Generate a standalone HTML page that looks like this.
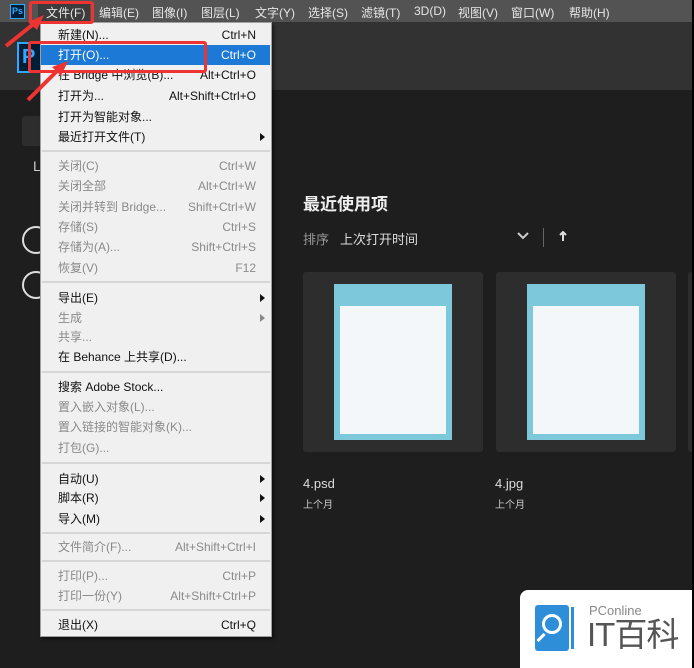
<!DOCTYPE html>
<html><head><meta charset="utf-8"><style>
*{margin:0;padding:0;box-sizing:border-box}
body{width:694px;height:668px;overflow:hidden;background:#1e1e1e;position:relative;font-family:"Liberation Sans","Noto Sans CJK SC",sans-serif}
.a{position:absolute}
#bar{left:0;top:0;width:694px;height:22px;background:#535353}
#bar span{position:absolute;top:4px;font-size:12px;color:#e6e6e6}
#band{left:0;top:22px;width:694px;height:68px;background:#323232}
#menu{left:40px;top:22px;width:232px;height:615px;background:#f0f0f0;border:1px solid #a0a0a0;box-shadow:2px 2px 3px rgba(0,0,0,.5)}
.r{position:absolute;left:41px;width:229px;height:20px;font-size:12px;line-height:20px;color:#111}
.r b{font-weight:normal;position:absolute;left:17px}
.r i{font-style:normal;position:absolute;right:14px}
.r.g{color:#8a8a8a}
.r.s::after{content:"";position:absolute;right:5px;top:6px;border-left:5px solid #111;border-top:4px solid transparent;border-bottom:4px solid transparent}
.r.g.s::after{border-left-color:#888}
.sep{position:absolute;left:42px;width:228px;height:2px;background:#d6d6d6}
.card{background:#2d2d2d;width:180px;height:180px;top:272px;border-radius:3px}
.blue{background:#7ec8dc;width:118px;height:156px}
.wh{background:#f4f7f9;width:106px;height:128px}
</style></head><body>
<div class="a" id="bar">
<div class="a" style="left:10px;top:4px;width:15px;height:15px;background:#001e36;border:1px solid #31a8ff;color:#31a8ff;font-size:9px;font-weight:bold;line-height:13px;text-align:center">Ps</div>
<div class="a" style="left:38px;top:2px;width:52px;height:19px;background:#3c3c3c"></div>
<span style="left:46px">文件(F)</span><span style="left:99px">编辑(E)</span><span style="left:152px">图像(I)</span><span style="left:201px">图层(L)</span><span style="left:255px">文字(Y)</span><span style="left:308px">选择(S)</span><span style="left:361px">滤镜(T)</span><span style="left:414px">3D(D)</span><span style="left:458px">视图(V)</span><span style="left:511px">窗口(W)</span><span style="left:569px">帮助(H)</span>
</div>
<div class="a" id="band"></div>
<div class="a" style="left:17px;top:42px;width:30px;height:31px;border:2px solid #31a8ff;background:#001e36;color:#31a8ff;font-size:20px;font-weight:bold;line-height:27px;padding-left:3px">P</div>
<div class="a" style="left:22px;top:116px;width:20px;height:30px;background:#2d2d2d;border-radius:3px"></div>
<div class="a" style="left:33px;top:158px;color:#ccc;font-size:14px">L</div>
<div class="a" style="left:22px;top:226px;width:28px;height:28px;border:2px solid #ddd;border-radius:50%"></div>
<div class="a" style="left:22px;top:271px;width:28px;height:28px;border:2px solid #ddd;border-radius:50%"></div>

<div class="a" style="left:303px;top:190px;color:#eee;font-size:17px;font-weight:bold">最近使用项</div>
<div class="a" style="left:303px;top:229px;color:#999;font-size:13px">排序</div>
<div class="a" style="left:340px;top:229px;color:#ddd;font-size:13px">上次打开时间</div>
<svg class="a" style="left:517px;top:232px" width="12" height="8"><path d="M1 1L6 6L11 1" stroke="#ccc" stroke-width="2" fill="none"/></svg>
<div class="a" style="left:543px;top:228px;width:1px;height:19px;background:#666"></div>
<svg class="a" style="left:559px;top:231px" width="8" height="10"><path d="M4 1V10M1 4L4 1L7 4" stroke="#ddd" stroke-width="2" fill="none"/></svg>
<div class="a card" style="left:303px"></div><div class="a blue" style="left:334px;top:284px"></div><div class="a wh" style="left:340px;top:306px"></div>
<div class="a card" style="left:496px"></div><div class="a blue" style="left:527px;top:284px"></div><div class="a wh" style="left:533px;top:306px"></div>
<div class="a card" style="left:688px;width:10px"></div>
<div class="a" style="left:303px;top:476px;color:#ddd;font-size:13px">4.psd</div>
<div class="a" style="left:303px;top:496px;color:#ccc;font-size:10px">上个月</div>
<div class="a" style="left:495px;top:476px;color:#ddd;font-size:13px">4.jpg</div>
<div class="a" style="left:495px;top:496px;color:#ccc;font-size:10px">上个月</div>

<div class="a" id="menu"></div>
<div class="a" style="left:41px;top:45px;width:229px;height:20px;background:#1c7ad6"></div>
<div class="r" style="top:25px"><b>新建(N)...</b><i>Ctrl+N</i></div>
<div class="r" style="top:45px;color:#fff"><b>打开(O)...</b><i>Ctrl+O</i></div>
<div class="r" style="top:65px"><b>在 Bridge 中浏览(B)...</b><i>Alt+Ctrl+O</i></div>
<div class="r" style="top:86px"><b>打开为...</b><i>Alt+Shift+Ctrl+O</i></div>
<div class="r" style="top:107px"><b>打开为智能对象...</b></div>
<div class="r s" style="top:127px"><b>最近打开文件(T)</b></div>
<div class="sep" style="top:150px"></div>
<div class="r g" style="top:156px"><b>关闭(C)</b><i>Ctrl+W</i></div>
<div class="r g" style="top:176px"><b>关闭全部</b><i>Alt+Ctrl+W</i></div>
<div class="r g" style="top:197px"><b>关闭并转到 Bridge...</b><i>Shift+Ctrl+W</i></div>
<div class="r g" style="top:217px"><b>存储(S)</b><i>Ctrl+S</i></div>
<div class="r g" style="top:237px"><b>存储为(A)...</b><i>Shift+Ctrl+S</i></div>
<div class="r g" style="top:258px"><b>恢复(V)</b><i>F12</i></div>
<div class="sep" style="top:281px"></div>
<div class="r s" style="top:288px"><b>导出(E)</b></div>
<div class="r g s" style="top:308px"><b>生成</b></div>
<div class="r g" style="top:327px"><b>共享...</b></div>
<div class="r" style="top:347px"><b>在 Behance 上共享(D)...</b></div>
<div class="sep" style="top:371px"></div>
<div class="r" style="top:377px"><b>搜索 Adobe Stock...</b></div>
<div class="r g" style="top:397px"><b>置入嵌入对象(L)...</b></div>
<div class="r g" style="top:417px"><b>置入链接的智能对象(K)...</b></div>
<div class="r g" style="top:438px"><b>打包(G)...</b></div>
<div class="sep" style="top:462px"></div>
<div class="r s" style="top:469px"><b>自动(U)</b></div>
<div class="r s" style="top:488px"><b>脚本(R)</b></div>
<div class="r s" style="top:509px"><b>导入(M)</b></div>
<div class="sep" style="top:532px"></div>
<div class="r g" style="top:537px"><b>文件简介(F)...</b><i>Alt+Shift+Ctrl+I</i></div>
<div class="sep" style="top:560px"></div>
<div class="r g" style="top:566px"><b>打印(P)...</b><i>Ctrl+P</i></div>
<div class="r g" style="top:586px"><b>打印一份(Y)</b><i>Alt+Shift+Ctrl+P</i></div>
<div class="sep" style="top:609px"></div>
<div class="r" style="top:615px"><b>退出(X)</b><i>Ctrl+Q</i></div>

<div class="a" style="left:29px;top:1px;width:65px;height:23px;border:3px solid #e33;border-radius:3px"></div>
<div class="a" style="left:28px;top:41px;width:179px;height:32px;border:3px solid #e33;border-radius:3px"></div>
<svg class="a" style="left:0;top:0" width="80" height="110">
<path d="M6 46L36 22" stroke="#e33" stroke-width="4"/><path d="M44 15L28 22L37 30Z" fill="#e33"/>
<path d="M28 100L60 68" stroke="#e33" stroke-width="4"/><path d="M68 61L52 67L61 76Z" fill="#e33"/>
</svg>

<div class="a" style="left:520px;top:590px;width:174px;height:78px;background:#fff;border-radius:8px 0 0 0"></div>
<div class="a" style="left:535px;top:605px;width:34px;height:46px;background:#2e8fd8;border-radius:3px"></div>
<div class="a" style="left:571px;top:607px;width:3px;height:42px;background:#2e8fd8"></div>
<div class="a" style="left:542px;top:614px;width:20px;height:20px;border:3px solid #fff;border-radius:50%"></div>
<div class="a" style="left:536px;top:636px;width:10px;height:3px;background:#fff;transform:rotate(-45deg)"></div>
<div class="a" style="left:589px;top:603px;color:#888;font-size:13px">PConline</div>
<div class="a" style="left:587px;top:616px;color:#555;font-size:33px;line-height:38px;letter-spacing:-1px">IT百科</div>
<div class="a" style="left:692px;top:0;width:2px;height:668px;background:#000"></div>
</body></html>
